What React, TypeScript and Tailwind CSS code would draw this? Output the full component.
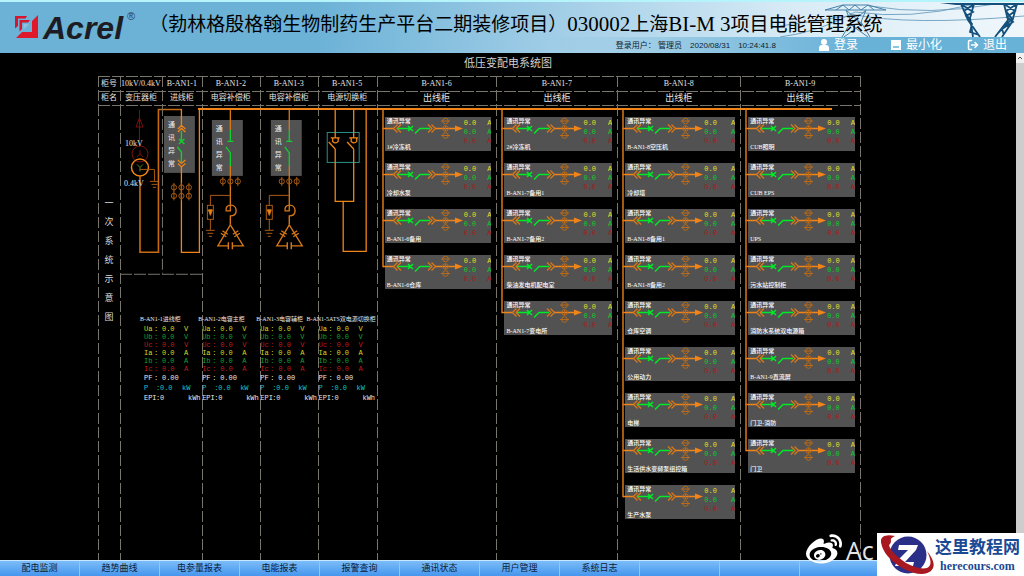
import { FaWeibo } from "react-icons/fa";
import { LogOut } from "lucide-react";

const SONG = "font-['Liberation_Serif','Noto_Sans_CJK_SC',serif]";
const MONO = "font-['Liberation_Mono','Noto_Sans_CJK_SC',monospace]";

const cabinets = [
  { no: "柜号", name: "柜名" },
  { no: "10kV/0.4kV", name: "变压器柜" },
  { no: "B-AN1-1", name: "进线柜" },
  { no: "B-AN1-2", name: "电容补偿柜" },
  { no: "B-AN1-3", name: "电容补偿柜" },
  { no: "B-AN1-5", name: "电源切换柜" },
  { no: "B-AN1-6", name: "出线柜" },
  { no: "B-AN1-7", name: "出线柜" },
  { no: "B-AN1-8", name: "出线柜" },
  { no: "B-AN1-9", name: "出线柜" },
];

const feeders = [
  ["1#冷冻机", "冷却水泵", "B-AN1-6备用", "B-AN1-6仓库"],
  ["2#冷冻机", "B-AN1-7备用1", "B-AN1-7备用2", "柴油发电机配电室", "B-AN1-7变电所"],
  ["B-AN1-8空压机", "冷却塔", "B-AN1-8备用1", "B-AN1-8备用2", "仓库空调", "公用动力", "电梯", "生活供水变频泵组控箱", "生产水泵"],
  ["CUB照明", "CUB EPS", "UPS", "污水站控制柜", "消防水系统双电源箱", "B-AN1-9直流屏", "门卫-消防", "门卫"],
];

const meters = [
  { name: "B-AN1-1进线柜", align: "-ml-1" },
  { name: "B-AN1-2电容主柜", align: "-ml-1" },
  { name: "B-AN1-3电容辅柜", align: "-ml-1" },
  { name: "B-AN1-5ATS双电源切换柜", align: "-ml-3" },
];

const readings = [
  { label: "Ua", value: "0.0", unit: "V", tone: "text-[#d8d820]" },
  { label: "Ub", value: "0.0", unit: "V", tone: "text-[#12a030]" },
  { label: "Uc", value: "0.0", unit: "V", tone: "text-[#c01818]" },
  { label: "Ia", value: "0.0", unit: "A", tone: "text-[#d8d820]" },
  { label: "Ib", value: "0.0", unit: "A", tone: "text-[#12a030]" },
  { label: "Ic", value: "0.0", unit: "A", tone: "text-[#c01818]" },
];

const menu = ["配电监测", "趋势曲线", "电参量报表", "电能报表", "报警查询", "通讯状态", "用户管理", "系统日志", "", "", "", ""];

const dashLeft =
  "bg-[repeating-linear-gradient(to_bottom,#77756c_0_11px,transparent_11px_14px)] bg-[length:1px_100%] bg-no-repeat";
const dashTop =
  "bg-[repeating-linear-gradient(to_right,#77756c_0_12px,transparent_12px_14px)] bg-[length:100%_1px] bg-no-repeat";

function Phi({ x, y }: { x: number; y: number }) {
  return (
    <g stroke="#a85a14" fill="none">
      <circle cx={x} cy={y} r="2.6" />
      <path d={`M${x} ${y - 4.5}v9`} />
    </g>
  );
}

function StatusBox({ x, y, h }: { x: number; y: number; h: number }) {
  return (
    <g stroke="none">
      <rect x={x} y={y} width="31" height={h} fill="#525252" />
      {["通", "讯", "异", "常"].map((c, i) => (
        <text key={c} x={x + 4} y={y + 11 + i * 13} fontSize="7" fill="#f0f0f0">
          {c}
        </text>
      ))}
    </g>
  );
}

function CapacitorBranch({ dx }: { dx: number }) {
  return (
    <g transform={`translate(${dx} 0)`} fill="none" stroke="#d87818">
      <StatusBox x={212} y={120} h={56} />
      <path d="M230.5 109V130M230.5 166V211H226.5" strokeWidth="1.3" />
      <g stroke="#10d030" strokeWidth="1.3">
        <path d="M230.5 130V141M227.5 141.5H233.5M226 147L230.5 153V166" />
      </g>
      <Phi x={223} y={181.5} />
      <Phi x={230.5} y={181.5} />
      <Phi x={238} y={181.5} />
      <path d="M230.5 195.5H210.5V205.5M210.5 219.5V230.5" stroke="#a85a14" />
      <rect x="207.5" y="205.5" width="6" height="14" stroke="#a85a14" />
      <path d="M208.5 210H212.5L210.5 215.5Z" fill="#f08418" />
      <path d="M206 230.5H215M207.5 233.5H213.5M209 236.5H212" stroke="#a85a14" />
      <path d="M226.3 211.5C225.4 207 228 205.3 231 205.3C234.5 205.3 236.3 208 236.3 210.8C236.3 214 234 216 230.5 216V225" strokeWidth="1.4" />
      <path d="M230.5 225L218 246H228.5M232.5 246H243.5L230.5 225" strokeWidth="1.3" />
      <path d="M228.5 242.5V249.5M232.5 242.5V249.5" strokeWidth="1.4" />
      <path d="M221 233.5L226.5 237M222.5 231L228 234.5M240 233.5L234.5 237M238.5 231L233 234.5" strokeWidth="1.3" />
    </g>
  );
}

function Schematic() {
  return (
    <svg viewBox="120 105 257 170" className={`block w-full overflow-visible ${SONG}`} role="img" aria-label="一次系统示意图">
      {/* transformer */}
      <g fill="none" stroke="#7a1010">
        <path d="M139.5 110V147M139.5 118L136 127H143Z" />
        <circle cx="140" cy="154" r="8" />
        <path d="M140 150v4l-3 3M140 154l3 3" />
      </g>
      <circle cx="140" cy="167.5" r="8.5" fill="none" stroke="#f08418" strokeWidth="1.5" />
      <path d="M137 164.5l3 3l3-3M140 167.5v4" fill="none" stroke="#4a8a20" />
      <g fill="none" stroke="#a85a14">
        <path d="M140 169.5H154.5V181M150 181.5H159M151.5 184.5H157.5M153 187.5H156" />
      </g>
      <path d="M140 176V252.5H158.5V109.5H182" fill="none" stroke="#c86c14" strokeWidth="1.6" />
      <text x="125" y="146" fontSize="8" fill="#e0e0e0">10kV</text>
      <text x="124" y="186" fontSize="8" fill="#e0e0e0">0.4kV</text>

      {/* incoming line */}
      <StatusBox x={164} y={116} h={57} />
      <g fill="none" stroke="#f08418" strokeWidth="1.3">
        <path d="M181.5 109V127M178 129L181.5 125.5L185.5 129M178 132L181.5 128.5L185.5 132" />
        <path d="M178 160L181.5 163.5L185.5 160M178 163.5L181.5 167L185.5 163.5" />
        <path d="M181.5 167V252.5H199.5V109" />
      </g>
      <g fill="none" stroke="#10d030" strokeWidth="1.4">
        <path d="M181.5 131V141M179 139L184.5 144M184.5 139L179 144M177.5 147L181.5 152V162" />
      </g>
      {[187.5, 196].map((y) => [174, 181.5, 189].map((x) => <Phi key={`${x}-${y}`} x={x} y={y} />))}

      {/* capacitor banks */}
      <CapacitorBranch dx={0} />
      <CapacitorBranch dx={59} />

      {/* transfer switch */}
      <rect x="327.5" y="132.5" width="32" height="30" fill="none" stroke="#2c9088" />
      <g fill="none" stroke="#f08418" strokeWidth="1.3">
        <path d="M335.5 109V138M335.5 149V201.5H354V149M354 109V138M343.5 201.5V251.5H366.5V109" />
        <path d="M331 138H340M333 138v3.5q3 3 5.5 0V138M329 142L335.5 149" />
        <path d="M349.5 138H358.5M351.5 138v3.5q3 3 5.5 0V138M347.5 142L354 149" />
      </g>
      <path d="M120 274.5H202" stroke="#77756c" strokeDasharray="12 2" />
      <path d="M162.5 105V274" stroke="#77756c" strokeDasharray="11 3" />
    </svg>
  );
}

function Feeder({ name, first }: { name: string; first: boolean }) {
  return (
    <li className="grid h-[34px] grid-cols-[78px_1fr] bg-[#525252]">
      <div className="col-start-1 row-start-1 flex min-w-0 flex-col justify-between whitespace-nowrap pl-0.5 text-[6px] font-medium leading-[8px] text-white">
        <span>通讯异常</span>
        <span>{name}</span>
      </div>
      <svg viewBox="0 0 78 34" className="col-start-1 row-start-1 block h-[34px] w-[78px] overflow-visible" fill="none" aria-hidden="true">
        <path d={first ? "M-2 -9V12.2" : "M-2 -35V12.2"} stroke="#d07014" strokeWidth="1.6" />
        <path d="M-2 11.5H9M50 11.5H71" stroke="#f08418" strokeWidth="1.3" />
        <path d="M12.5 7.5L8.5 11.5L12.5 15.5M16 7.5L12 11.5L16 15.5M43 7.5L47 11.5L43 15.5M46.5 7.5L50.5 11.5L46.5 15.5" stroke="#d87818" strokeWidth="1.3" />
        <path d="M13 11.5H26M23 9L28 14M28 9L23 14M30 16.5L35 11.5H45" stroke="#00e828" strokeWidth="1.5" />
        <g stroke="#b86a18">
          <circle cx="60.5" cy="4" r="2.8" />
          <circle cx="60.5" cy="11.5" r="2.8" />
          <circle cx="60.5" cy="18.5" r="2.8" />
          <path d="M56 4H65M56 18.5H65M60.5 9V14" />
        </g>
        <path d="M70 8.5L78 11.5L70 14.5Z" fill="#f08418" />
      </svg>
      <div className={`col-start-2 row-start-1 flex flex-col overflow-hidden pl-px pt-0.5 text-[7px] leading-[9px] ${MONO}`}>
        {["text-[#e0e020]", "text-[#00d028]", "text-[#b01818]"].map((tone) => (
          <span key={tone} className={`flex justify-between ${tone}`}>
            <span>0.0</span>
            <span>A</span>
          </span>
        ))}
      </div>
    </li>
  );
}

function Meter({ name, align }: { name: string; align: string }) {
  return (
    <table className={`block min-w-0 text-[7px] leading-[8px] text-[#e8e8e8] ${MONO}`}>
      <caption className={`block h-[10px] whitespace-nowrap text-left text-[6px] ${align} ${SONG}`}>{name}</caption>
      <tbody className="block">
        {readings.map((r) => (
          <tr key={r.label} className={`grid grid-cols-[10px_8px_22px_1fr] ${r.tone}`}>
            <th className="text-left font-normal">{r.label}</th>
            <td>:</td>
            <td>{r.value}</td>
            <td>{r.unit}</td>
          </tr>
        ))}
        <tr className="grid grid-cols-[10px_8px_1fr] leading-[10px]">
          <th className="text-left font-normal">PF</th>
          <td>:</td>
          <td>0.00</td>
        </tr>
        <tr className="grid grid-cols-[12px_4px_22px_1fr] leading-[10px] text-[#10c8c8]">
          <th className="text-left font-normal">P</th>
          <td>:</td>
          <td>0.0</td>
          <td>kW</td>
        </tr>
        <tr className="grid grid-cols-[12px_4px_28px_1fr] leading-[10px]">
          <th className="text-left font-normal">EPI</th>
          <td>:</td>
          <td>0</td>
          <td>kWh</td>
        </tr>
      </tbody>
    </table>
  );
}

function Pylons() {
  return (
    <svg viewBox="0 0 244 36" className="block h-9 w-[244px]" fill="none" stroke="#1f5f8c" aria-hidden="true">
      <path d="M0 35Q40 30 75 10Q130 18 190 3M70 12Q130 24 244 14M90 4Q150 14 215 2M75 13L0 24" strokeWidth="0.8" stroke="#5d93b5" />
      <path d="M45 8L63 3H88L106 8H45M56 8L63 3L69 8L75 3L81 8L88 3L94 8M66 8L71 20L62 35M86 8L81 20L90 35M66 8L82 22L64 35M86 8L70 22L88 35" stroke="#4682a8" />
      <path d="M160 1H244V3H176Z" fill="#14507c" stroke="none" />
      <path d="M181 2L188 18L200 35M194 2L190 16L193 35M181 2L193 10L186 14L192 22L190 30L199 33M194 2L184 9L190 18M224 2L228 18L215 35M237 2L232 20L222 35M224 2L235 9L227 15L233 20L222 27L224 33M237 2L226 9L232 17L218 31" stroke="#14507c" strokeWidth="1.8" />
    </svg>
  );
}

export default function App() {
  return (
    <div className={`relative flex min-h-screen flex-col bg-black text-black ${SONG}`}>
      <header className="grid h-[53px] border-t-2 border-[#b4f4fa] bg-[linear-gradient(to_right,#6cb2d7_0,#6cb2d7_31%,#a3cee7_55%,#d9ecf6_78%,#f0f7fb_100%)]">
        <div className="col-start-1 row-start-1 justify-self-end">
          <Pylons />
        </div>
        <div className="col-start-1 row-start-1 h-4 self-end bg-[linear-gradient(to_right,transparent_50%,#9bcbe5_65%,#68b1d7_84%)]" />
        <div className="col-start-1 row-start-1 flex items-start pl-[15px]">
          <svg viewBox="0 0 24 24" className="mt-[13px] size-6" aria-hidden="true">
            <path d="M0 1H12L10.500 3.500H3V11L0 13.500Z" fill="#d8152c" />
            <path d="M4.500 5H15L13 7.500H7V14L4.500 16.500Z" fill="#d8152c" />
            <path d="M23 0V23H1L7 17H17V6Z" fill="#e0182c" />
            <path d="M8.500 9H14L8.500 14.500Z" fill="#8fc0de" />
          </svg>
          <span className="ml-1 mt-2 font-['Liberation_Sans',sans-serif] text-[32px] font-bold italic leading-9 text-[#1c1c22]">Acrel</span>
          <span className="ml-1 mt-2 font-['Liberation_Sans',sans-serif] text-[11px] leading-3 text-[#2a3c50]">®</span>
          <h1 className="ml-[14px] mt-2 whitespace-nowrap text-[19px] leading-7">
            （勃林格殷格翰生物制药生产平台二期装修项目）<span className="text-[21px]">030002</span>上海<span className="text-[21px]">BI-M 3</span>项目电能管理系统
          </h1>
        </div>
        <div className="col-start-1 row-start-1 flex h-4 items-center self-end pr-[17px] font-['Liberation_Sans','Noto_Sans_CJK_SC',sans-serif]">
          <p className="ml-auto flex gap-2 pt-0.5 text-[8px] leading-3 text-[#10202c]">
            <span>登录用户： 管理员</span>
            <time>2020/08/31</time>
            <time>10:24:41.8</time>
          </p>
          <nav className="ml-[42px] flex items-center gap-6 text-[12px] leading-4 text-white">
            <button className="flex items-center gap-1 pr-2">
              <svg viewBox="0 0 12 12" className="size-3" fill="currentColor" aria-hidden="true">
                <circle cx="6" cy="3" r="3" />
                <path d="M1 12V9Q1 6 4 6H8Q11 6 11 9V12Z" />
              </svg>
              登录
            </button>
            <button className="flex items-center gap-1">
              <svg viewBox="0 0 12 12" className="size-3" aria-hidden="true">
                <path d="M1 1H11V11H1Z" fill="white" />
                <path d="M3 8H9" stroke="#68b1d7" strokeWidth="1.5" />
              </svg>
              最小化
            </button>
            <button className="flex items-center gap-1 pl-px">
              <LogOut className="size-3" strokeWidth={3} />
              退出
            </button>
          </nav>
        </div>
      </header>

      <div className="flex flex-1 bg-black">
        <main className="flex flex-1 flex-col">
          <h2 className="h-[23px] pt-0.5 text-center text-[11px] leading-4 text-[#d0d0d0]">低压变配电系统图</h2>
          <section className="ml-[98px] grid w-3/4 flex-1 grid-cols-[22fr_42fr_40fr_58fr_58fr_59fr_120fr_121fr_123fr_120fr] grid-rows-[15px_14px_1fr]">
            <div className={`col-span-full row-start-1 ${dashTop}`} />
            <div className={`col-span-full row-start-2 ${dashTop}`} />
            <div className={`col-span-full row-start-3 h-px ${dashTop}`} />
            {cabinets.map((c, i) => (
              <div
                key={i}
                className={`row-span-2 row-start-1 flex flex-col whitespace-nowrap text-center text-[#e4e4e4] ${dashLeft}`}
                style={{ gridColumnStart: i + 1 }}
              >
                <span className="text-[8px] leading-[15px]">{c.no}</span>
                <span className={i > 5 ? "text-[9px] leading-[14px]" : "text-[8px] leading-[14px]"}>{c.name}</span>
              </div>
            ))}
            <div className={`col-start-10 row-span-3 row-start-1 -mr-px w-px justify-self-end ${dashLeft}`} />

            <div className={`col-start-1 row-start-3 flex flex-col items-center pt-[89px] text-[9px] leading-[19px] text-[#d8d8d8] ${dashLeft}`}>
              {"一次系统示意图".split("").map((c) => (
                <span key={c}>{c}</span>
              ))}
            </div>
            <div className={`col-start-2 row-start-3 ${dashLeft}`} />
            <div className={`col-start-4 row-start-3 ${dashLeft}`} />
            <div className={`col-start-5 row-start-3 ${dashLeft}`} />
            <div className={`col-start-6 row-start-3 ${dashLeft}`} />

            <div className="col-span-5 col-start-2 row-start-3">
              <Schematic />
              <div className="mt-10 grid grid-cols-4 pl-6">
                {meters.map((m) => (
                  <Meter key={m.name} name={m.name} align={m.align} />
                ))}
              </div>
            </div>

            {feeders.map((list, i) => (
              <ul
                key={i}
                className={`row-start-3 flex flex-col gap-3 pl-2 pr-[5px] pt-3 ${dashLeft}`}
                style={{ gridColumnStart: i + 7 }}
              >
                {list.map((name, n) => (
                  <Feeder key={name} name={name} first={n === 0} />
                ))}
              </ul>
            ))}
            <div className="col-span-7 col-start-4 row-start-3 -ml-1 mr-7 mt-[3px] h-0.5 bg-[#f08418]" />
          </section>
        </main>
        <aside className="flex w-2 flex-col bg-[#f0f0f0]">
          <svg viewBox="0 0 8 10" className="h-[10px] w-2" fill="none" stroke="#505050" aria-hidden="true">
            <path d="M2 6L4 4L6 6" />
          </svg>
          <div className="flex-1 bg-[#cdcdcd]" />
        </aside>
      </div>

      <footer className="flex h-4 overflow-hidden border-t border-[#c4e6ff] bg-[linear-gradient(to_bottom,#7cbcf8,#4596ee)]">
        {menu.map((m, i) => (
          <button key={i} aria-label={m || "空白"} className="w-20 shrink-0 border-r border-[#8cc8fa] text-[9px] leading-[15px] text-[#0c1c38]">
            {m}
          </button>
        ))}
      </footer>

      <div className="absolute bottom-2 right-[146px] flex items-center gap-1 text-[#e4e4e4]">
        <FaWeibo className="size-9 text-white" />
        <span className="w-8 font-['Open_Sans',sans-serif] text-[25px] leading-8">Ac</span>
      </div>
      <div className="absolute bottom-0 right-0 flex h-[43px] w-[147px] items-center bg-white">
        <svg viewBox="0 0 58 43" className="h-[43px] w-[58px] shrink-0" aria-hidden="true">
          <circle cx="31" cy="22" r="18.5" fill="#2a2f88" />
          <path d="M22 12H41L39 17L28 29H37L36 33H18L20 28L31 17H21Z" fill="white" />
          <path d="M18 3Q4 0 4 9Q6 24 27 36Q45 45 54 38Q61 32 50 18Q57 32 50 35Q42 37 29 30Q11 18 12 10Q13 5 18 3Z" fill="#a81820" />
          <circle cx="9" cy="8" r="5" fill="#a81820" />
        </svg>
        <div className="flex flex-col text-center font-bold text-[#1a4a94]">
          <span className="whitespace-nowrap text-[17px] leading-[22px]">这里教程网</span>
          <span className="text-[12px] leading-[14px]">herecours.com</span>
        </div>
      </div>
    </div>
  );
}
